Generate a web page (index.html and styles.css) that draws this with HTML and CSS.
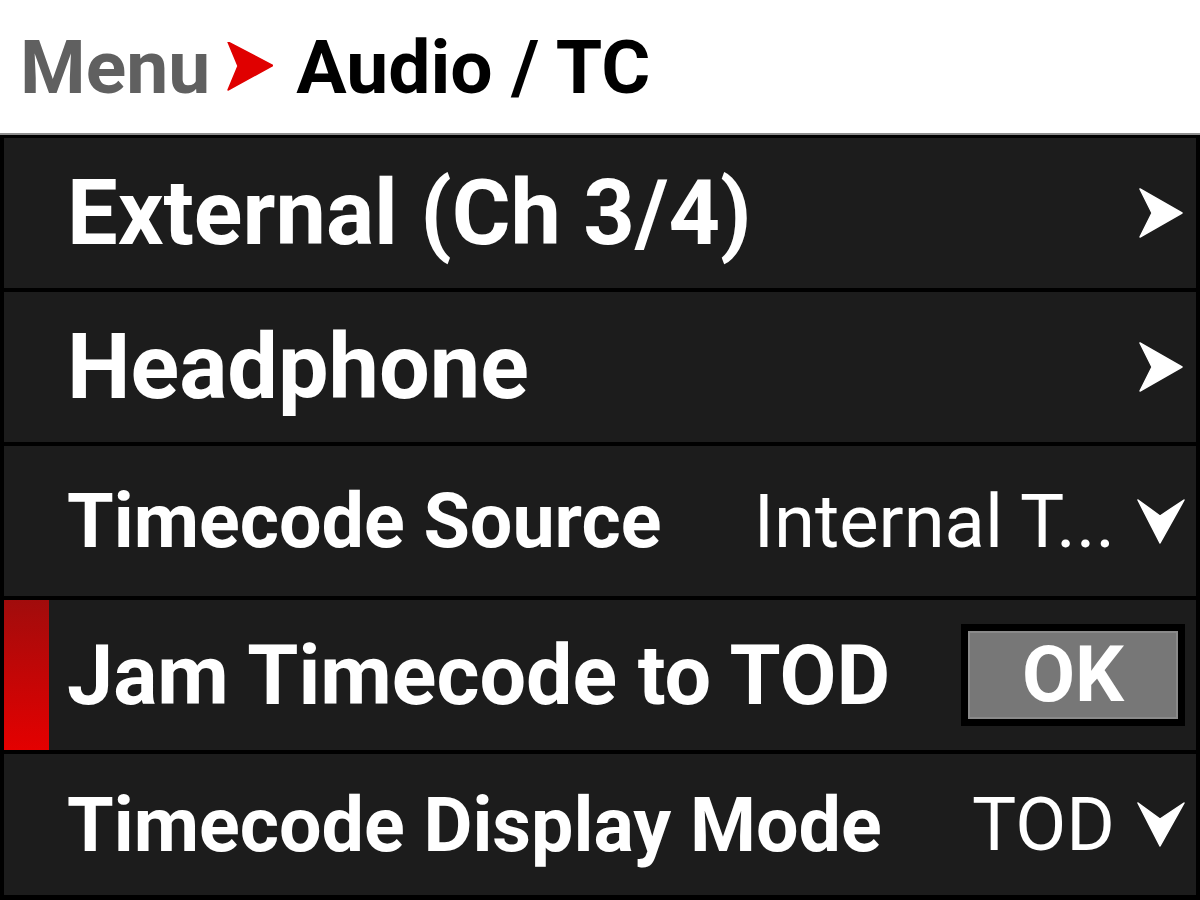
FILE: index.html
```html
<!DOCTYPE html>
<html>
<head>
<meta charset="utf-8">
<link rel="stylesheet" href="styles.css">
</head>
<body>
<header class="crumbs">
  <span class="crumb-parent">Menu</span>
  <svg class="crumb-sep" width="46" height="49" viewBox="0 0 46 49"><path d="M1 0 L46 23.5 L1 48 L11 24 Z" fill="#e00000" stroke="#e00000" stroke-width="1.5" stroke-linejoin="round"/></svg>
  <span class="crumb-current">Audio / TC</span>
</header>
<main class="panel">
  <div class="row">
    <span class="marker"></span>
    <span class="label big">External (Ch 3/4)</span>
    <svg class="chev-right" width="44" height="50" viewBox="0 0 44 50"><path d="M1 1 L43 25 L1 49 L13 25 Z" fill="#fff" stroke="#fff" stroke-width="1.5" stroke-linejoin="round"/></svg>
  </div>
  <div class="row">
    <span class="marker"></span>
    <span class="label big">Headphone</span>
    <svg class="chev-right" width="44" height="50" viewBox="0 0 44 50"><path d="M1 1 L43 25 L1 49 L13 25 Z" fill="#fff" stroke="#fff" stroke-width="1.5" stroke-linejoin="round"/></svg>
  </div>
  <div class="row">
    <span class="marker"></span>
    <span class="label mid">Timecode Source</span>
    <span class="value">Internal T...</span>
    <svg class="chev-down" width="48" height="45" viewBox="0 0 48 45"><path d="M1 1 L23 17 L47 1 L23 44 Z" fill="#fff" stroke="#fff" stroke-width="1.5" stroke-linejoin="round"/></svg>
  </div>
  <div class="row selected">
    <span class="marker"></span>
    <span class="label jam">Jam Timecode to TOD</span>
    <span class="btn-frame"><span class="btn">OK</span></span>
  </div>
  <div class="row last">
    <span class="marker"></span>
    <span class="label mid">Timecode Display Mode</span>
    <span class="value">TOD</span>
    <svg class="chev-down" width="48" height="45" viewBox="0 0 48 45"><path d="M1 1 L23 17 L47 1 L23 44 Z" fill="#fff" stroke="#fff" stroke-width="1.5" stroke-linejoin="round"/></svg>
  </div>
</main>
</body>
</html>
```
FILE: styles.css
```css
html, body {
  margin: 0;
  padding: 0;
  background: #ffffff;
  width: 1200px;
  height: 900px;
  overflow: hidden;
  font-family: Roboto, "Liberation Sans", sans-serif;
}
.crumbs {
  height: 133px;
  display: flex;
  align-items: center;
  padding-left: 20px;
  box-sizing: border-box;
  font-weight: 700;
  font-size: 75px;
}
.crumb-parent { color: #606060; }
.crumb-sep { margin: 0 23px 0 17px; }
.crumb-current { color: #000; }
.panel {
  height: 767px;
  box-sizing: border-box;
  background: #000;
  border-top: 2px solid #8e8e8e;
  padding: 3px 4px 5px 4px;
  display: flex;
  flex-direction: column;
  gap: 4px;
}
.row {
  height: 150px;
  flex: none;
  background: #1c1c1c;
  display: flex;
  align-items: center;
  padding-right: 13px;
  color: #fff;
}
.row.last { flex: 1; height: auto; }
.marker {
  width: 45px;
  align-self: stretch;
  flex: none;
}
.selected .marker {
  background: linear-gradient(#a10c0c, #e40000);
}
.label {
  margin-left: 18px;
  font-weight: 700;
  flex: 1;
  white-space: nowrap;
}
.big { font-size: 90px; }
.mid { font-size: 75.4px; }
.jam { font-size: 82.6px; }
.value {
  font-size: 74.2px;
  font-weight: 400;
  margin-right: 22px;
}
.chev-right { flex: none; }
.chev-down { flex: none; margin-right: -2px; }
.btn-frame {
  background: #000;
  padding: 7px;
  margin-right: -2px;
  display: flex;
}
.btn {
  width: 206px;
  height: 84px;
  background: #777;
  border: 2px solid #8a8a8a;
  display: flex;
  align-items: center;
  justify-content: center;
  font-size: 77px;
  font-weight: 700;
}
```
